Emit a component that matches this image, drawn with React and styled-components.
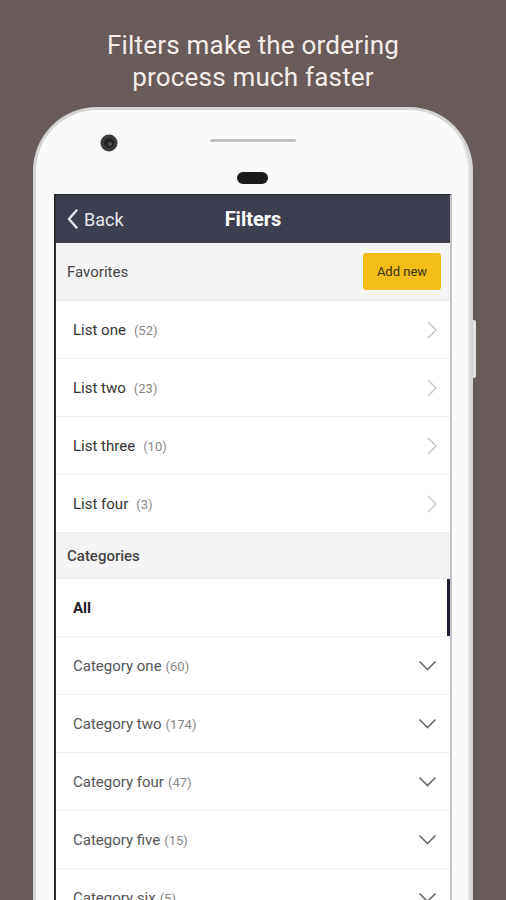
import React from 'react';
import styled, { createGlobalStyle } from 'styled-components';

const Global = createGlobalStyle`
  html, body { margin: 0; padding: 0; }
  body {
    background: #695b5a;
    font-family: Roboto, "Noto Sans", "Liberation Sans", sans-serif;
  }
`;

const Page = styled.div`
  height: 900px;
  overflow: hidden;
  background: #695b5a;
`;

const Headline = styled.h1`
  margin: 0;
  padding-top: 29px;
  height: 107px;
  box-sizing: border-box;
  text-align: center;
  color: #f4eeeb;
  font-size: 26px;
  font-weight: 400;
  line-height: 32px;
  letter-spacing: 0.2px;
`;

const Phone = styled.div`
  position: relative;
  margin-left: 33px;
  width: 440px;
  height: 900px;
  box-sizing: border-box;
  background: #fafafa;
  border: 3px solid #d4d4d4;
  border-bottom: none;
  border-radius: 64px 64px 0 0;
  box-shadow: inset -8px 0 0 -6px #e2e2e2;
`;

const SideButton = styled.div`
  position: absolute;
  right: -6px;
  top: 210px;
  width: 3px;
  height: 58px;
  background: #e4e4e4;
  border-radius: 0 2px 2px 0;
`;

const Bezel = styled.div`
  height: 84px;
  display: flex;
  justify-content: center;
`;

const Screen = styled.div`
  margin: 0 18px;
  background: #fff;
  border-left: 2px solid #2a2a2e;
  border-right: 2px solid #c4c4c4;
  border-top: 1px solid #2a2a2e;
`;

const NavBar = styled.div`
  height: 48px;
  background: #3c3f4f;
  display: grid;
  grid-template-columns: 1fr auto 1fr;
  align-items: center;
`;

const BackButton = styled.div`
  display: flex;
  align-items: center;
  gap: 6px;
  padding-left: 11px;
  color: #e6e7ec;
  font-size: 18px;
`;

const NavTitle = styled.div`
  color: #fff;
  font-size: 20px;
  font-weight: 700;
`;

const SectionHeader = styled.div`
  height: ${p => p.$h}px;
  background: #f4f4f4;
  display: flex;
  align-items: center;
  justify-content: space-between;
  padding: 0 9px 0 11px;
  color: #444;
  font-size: 15px;
  font-weight: ${p => (p.$medium ? 500 : 400)};
  border-bottom: 1px solid #ececec;
`;

const AddButton = styled.button`
  width: 78px;
  height: 37px;
  border: none;
  border-radius: 3px;
  background: #f4bd17;
  color: #3a3318;
  font-family: inherit;
  font-size: 13px;
  padding: 0;
`;

const Row = styled.div`
  position: relative;
  height: 58px;
  box-sizing: border-box;
  display: flex;
  align-items: center;
  justify-content: space-between;
  padding: 0 ${p => (p.$down ? 13 : 12)}px 0 17px;
  border-bottom: 1px solid #efefef;
`;

const Label = styled.span`
  font-size: 15px;
  color: ${p => (p.$strong ? '#222' : p.$soft ? '#555' : '#333')};
  font-weight: ${p => (p.$strong ? 700 : 400)};
`;

const Count = styled.span`
  margin-left: ${p => p.$gap}px;
  font-size: 13px;
  color: #888;
`;

const Indicator = styled.div`
  position: absolute;
  right: 0;
  top: 0;
  bottom: 0;
  width: 3px;
  background: #1d2034;
`;

const ChevronRight = () => (
  <svg width="12" height="20" viewBox="0 0 12 20">
    <path d="M2 2 L10 10 L2 18" fill="none" stroke="#c9c9c9" strokeWidth="1.5" />
  </svg>
);

const ChevronDown = () => (
  <svg width="19" height="11" viewBox="0 0 19 11">
    <path d="M1.5 1.5 L9.5 9.5 L17.5 1.5" fill="none" stroke="#6a6a6a" strokeWidth="1.6" />
  </svg>
);

const BackArrow = () => (
  <svg width="11" height="20" viewBox="0 0 11 20">
    <path d="M9.5 1.5 L2 10 L9.5 18.5" fill="none" stroke="#e6e7ec" strokeWidth="2.4" strokeLinecap="round" />
  </svg>
);

const BezelArt = () => (
  <svg width="434" height="84" viewBox="0 0 434 84">
    <circle cx="73" cy="33" r="8.5" fill="#3a3a3a" />
    <circle cx="73" cy="33" r="5" fill="#222" />
    <circle cx="74" cy="34" r="2" fill="#555" />
    <rect x="174" y="29" width="86" height="3" rx="1.5" fill="#c2c2c2" />
    <rect x="201" y="62" width="31" height="12" rx="6" fill="#1b1b1b" />
  </svg>
);

const lists = [
  ['List one', 52],
  ['List two', 23],
  ['List three', 10],
  ['List four', 3],
];

const categories = [
  ['Category one', 60],
  ['Category two', 174],
  ['Category four', 47],
  ['Category five', 15],
  ['Category six', 5],
];

export default function App() {
  return (
    <Page>
      <Global />
      <Headline>
        Filters make the ordering
        <br />
        process much faster
      </Headline>
      <Phone>
        <SideButton />
        <Bezel>
          <BezelArt />
        </Bezel>
        <Screen>
          <NavBar>
            <BackButton>
              <BackArrow />
              Back
            </BackButton>
            <NavTitle>Filters</NavTitle>
            <div />
          </NavBar>
          <SectionHeader $h={57}>
            Favorites
            <AddButton>Add new</AddButton>
          </SectionHeader>
          {lists.map(([name, n]) => (
            <Row key={name}>
              <span>
                <Label>{name}</Label>
                <Count $gap={8}>({n})</Count>
              </span>
              <ChevronRight />
            </Row>
          ))}
          <SectionHeader $h={45} $medium>
            Categories
          </SectionHeader>
          <Row>
            <Label $strong>All</Label>
            <Indicator />
          </Row>
          {categories.map(([name, n]) => (
            <Row key={name} $down>
              <span>
                <Label $soft>{name}</Label>
                <Count $gap={4}>({n})</Count>
              </span>
              <ChevronDown />
            </Row>
          ))}
        </Screen>
      </Phone>
    </Page>
  );
}
